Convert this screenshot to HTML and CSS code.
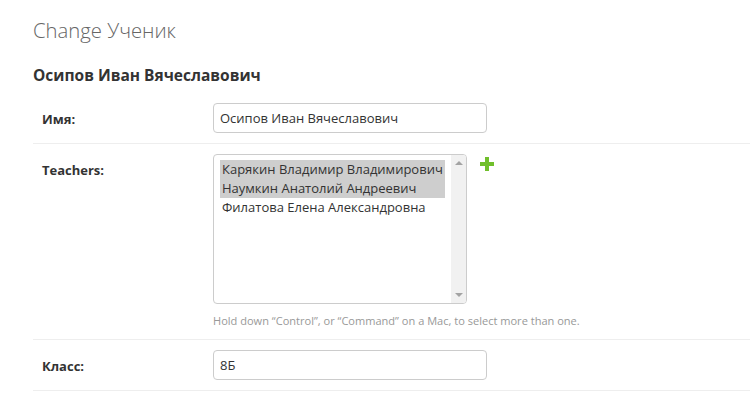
FILE: index.html
```html
<!DOCTYPE html>
<html lang="ru">
<head>
<meta charset="utf-8">
<title>Change Ученик</title>
<link rel="stylesheet" href="styles.css">
</head>
<body>
<div class="content">
  <h1 class="title">Change Ученик</h1>
  <form class="form">
    <h2 class="object-name">Осипов Иван Вячеславович</h2>
    <div class="form-row">
      <label class="label" for="id_name">Имя:</label>
      <div class="field">
        <input class="text-input" id="id_name" type="text" value="Осипов Иван Вячеславович">
      </div>
    </div>
    <div class="form-row">
      <label class="label">Teachers:</label>
      <div class="field">
        <div class="field-line">
          <div class="listbox" role="listbox" aria-multiselectable="true">
            <div class="options">
              <div class="option selected">Карякин Владимир Владимирович</div>
              <div class="option selected">Наумкин Анатолий Андреевич</div>
              <div class="option">Филатова Елена Александровна</div>
            </div>
            <div class="scrollbar">
              <span class="arrow arrow-up"></span>
              <span class="arrow arrow-down"></span>
            </div>
          </div>
          <a class="add-link" href="#" title="Add another">
            <svg width="14" height="14" viewBox="0 0 14 14" aria-hidden="true">
              <rect x="5" y="0" width="4" height="14" fill="#70bf2b"/>
              <rect x="0" y="5" width="14" height="4" fill="#70bf2b"/>
            </svg>
          </a>
        </div>
        <p class="help">Hold down “Control”, or “Command” on a Mac, to select more than one.</p>
      </div>
    </div>
    <div class="form-row">
      <label class="label" for="id_class">Класс:</label>
      <div class="field">
        <input class="text-input" id="id_class" type="text" value="8Б">
      </div>
    </div>
  </form>
</div>
</body>
</html>
```

FILE: styles.css
```css
html, body {
  margin: 0;
  padding: 0;
  background: #fff;
}

body {
  font-family: "Open Sans", "Noto Sans", "DejaVu Sans", sans-serif;
  font-size: 13px;
  color: #333;
}

.content {
  padding: 16px 0 0 33px;
}

.title {
  margin: 0;
  font-size: 20.3px;
  font-weight: 300;
  line-height: 28px;
  color: #666;
}

.form {
  margin: 0;
}

.object-name {
  margin: 20px 0 0 0;
  font-size: 15.5px;
  font-weight: 700;
  line-height: 22px;
  color: #333;
  padding-bottom: 7px;
}

.form-row {
  display: flex;
  align-items: flex-start;
  padding: 10px 0 10px 9px;
  border-bottom: 1px solid #eee;
}

.label {
  width: 161px;
  padding: 7px 10px 0 0;
  font-weight: 700;
  color: #333;
  line-height: 18px;
  flex-shrink: 0;
}

.field {
  display: flex;
  flex-direction: column;
}

.text-input {
  box-sizing: border-box;
  width: 274px;
  height: 30px;
  margin: 0;
  padding: 5px 6px;
  border: 1px solid #ccc;
  border-radius: 4px;
  font-family: "Open Sans", "Noto Sans", sans-serif;
  font-size: 13px;
  color: #333;
  background: #fff;
}

.field-line {
  display: flex;
  align-items: flex-start;
  gap: 13px;
}

.listbox {
  box-sizing: border-box;
  display: flex;
  width: 254px;
  height: 150px;
  border: 1px solid #ccc;
  border-radius: 4px;
  overflow: hidden;
  background: #fff;
}

.options {
  flex: 1;
  padding: 5px 6px;
}

.option {
  height: 19px;
  line-height: 18px;
  padding: 0 2px;
  color: #333;
  white-space: nowrap;
}

.option.selected {
  background: #cecece;
}

.scrollbar {
  width: 15px;
  background: #f1f1f1;
  display: flex;
  flex-direction: column;
  justify-content: space-between;
  align-items: center;
  padding: 6px 0;
}

.arrow {
  width: 0;
  height: 0;
  border-left: 4px solid transparent;
  border-right: 4px solid transparent;
}

.arrow-up {
  border-bottom: 4px solid #a3a3a3;
}

.arrow-down {
  border-top: 4px solid #a3a3a3;
}

.add-link {
  display: block;
  margin-top: 3px;
  line-height: 0;
}

.help {
  margin: 9px 0 0 0;
  font-size: 11.05px;
  line-height: 16px;
  color: #999;
}
```
